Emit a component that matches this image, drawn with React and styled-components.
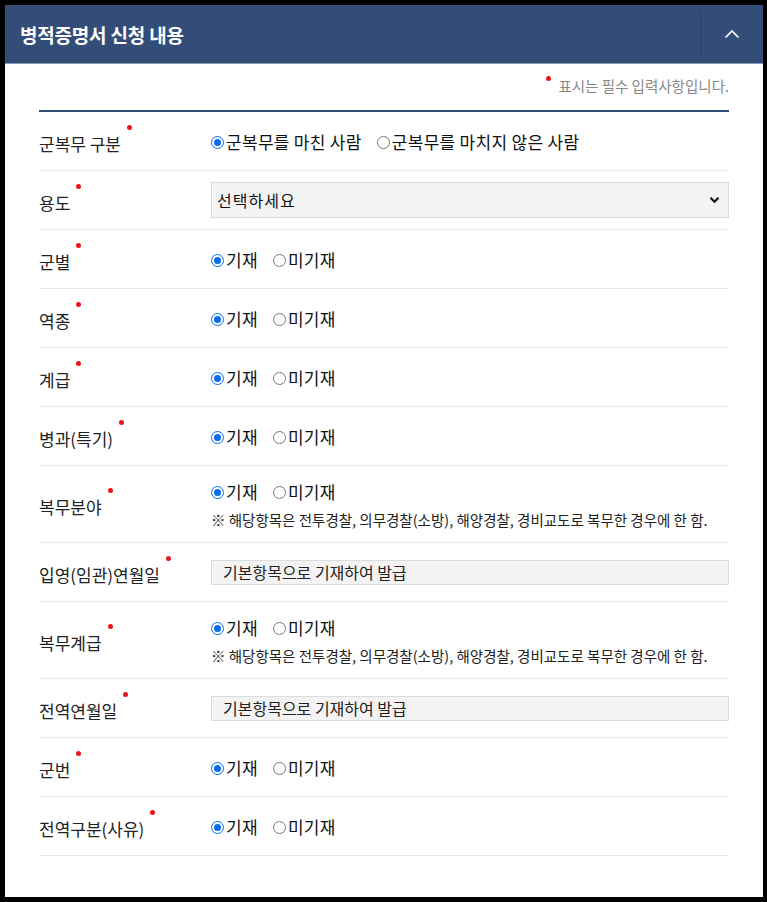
import React from "react";
import styled, { createGlobalStyle } from "styled-components";

const GlobalStyle = createGlobalStyle`
  html, body { margin: 0; padding: 0; background: #000; }
  body { font-family: "Noto Sans CJK KR", "Noto Sans", sans-serif; }
`;

const Frame = styled.div`
  background: #000;
  padding: 5px 4px 5px 5px;
  width: 767px;
  height: 902px;
  box-sizing: border-box;
`;

const Panel = styled.section`
  background: #fff;
  height: 100%;
  display: flex;
  flex-direction: column;
`;

const Header = styled.div`
  height: 59px;
  background: #344d78;
  border-bottom: 1px solid #8898b4;
  display: flex;
  align-items: center;
  justify-content: space-between;
  box-sizing: border-box;
`;

const Title = styled.h2`
  margin: 0 0 0 15px;
  color: #fff;
  font-size: 19px;
  font-weight: 700;
  letter-spacing: -0.2px;
`;

const Toggle = styled.button`
  width: 63px;
  height: 44px;
  border: 0;
  border-left: 1px solid #2a3f63;
  background: transparent;
  display: flex;
  align-items: center;
  justify-content: center;
  padding: 0;
`;

const Body = styled.div`
  padding: 0 34px;
`;

const Note = styled.p`
  margin: 11px 0 0;
  text-align: right;
  font-size: 14.5px;
  color: #888;
  padding-bottom: 14px;
  border-bottom: 2px solid #344d78;
`;

const Dot = styled.span`
  display: inline-block;
  width: 5px;
  height: 5px;
  border-radius: 50%;
  background: #e8141c;
  vertical-align: top;
  margin: ${({ $note }) => ($note ? "1px 7px 0 0" : "-6px 0 0 6px")};
`;

const Row = styled.div`
  display: grid;
  grid-template-columns: 172px 1fr;
  align-items: center;
  min-height: ${({ $tall }) => ($tall ? "76px" : "58px")};
  border-bottom: 1px solid #e8e8e8;
`;

const Label = styled.div`
  font-size: 17px;
  color: #222;
  padding-top: 4px;
`;

const Options = styled.div`
  display: flex;
  align-items: center;
  gap: 15px;
  font-size: 17px;
  color: #111;
  letter-spacing: 0.3px;
`;

const Option = styled.label`
  display: flex;
  align-items: center;
`;

const Radio = styled.span`
  width: 13px;
  height: 13px;
  border-radius: 50%;
  box-sizing: border-box;
  border: 1px solid ${({ $on }) => ($on ? "#0a6cf0" : "#767676")};
  margin: 2px 2px 0 0;
  display: flex;
  align-items: center;
  justify-content: center;
  &::after {
    content: "";
    width: 7px;
    height: 7px;
    border-radius: 50%;
    background: ${({ $on }) => ($on ? "#0a6cf0" : "transparent")};
  }
`;

const Value = styled.div`
  display: flex;
  flex-direction: column;
  gap: 5px;
`;

const Hint = styled.div`
  font-size: 14.5px;
  color: #222;
`;

const Select = styled.div`
  height: 36px;
  box-sizing: border-box;
  border: 1px solid #dcdcdc;
  background: #f3f3f3;
  display: flex;
  align-items: center;
  justify-content: space-between;
  padding: 0 8px 0 5px;
  font-size: 16px;
  letter-spacing: 1px;
  color: #111;
`;

const ReadOnly = styled.div`
  height: 25px;
  box-sizing: border-box;
  border: 1px solid #dcdcdc;
  background: #f3f3f3;
  display: flex;
  align-items: center;
  padding: 0 11px;
  font-size: 16px;
  color: #222;
`;

const HINT = "※ 해당항목은 전투경찰, 의무경찰(소방), 해양경찰, 경비교도로 복무한 경우에 한 함.";

const YesNo = () => (
  <Options>
    <Option><Radio $on />기재</Option>
    <Option><Radio />미기재</Option>
  </Options>
);

const rows = [
  { label: "군복무 구분", kind: "service" },
  { label: "용도", kind: "select" },
  { label: "군별", kind: "yn" },
  { label: "역종", kind: "yn" },
  { label: "계급", kind: "yn" },
  { label: "병과(특기)", kind: "yn" },
  { label: "복무분야", kind: "ynHint" },
  { label: "입영(임관)연월일", kind: "fixed" },
  { label: "복무계급", kind: "ynHint" },
  { label: "전역연월일", kind: "fixed" },
  { label: "군번", kind: "yn" },
  { label: "전역구분(사유)", kind: "yn" },
];

const renderValue = (kind) => {
  switch (kind) {
    case "service":
      return (
        <Options>
          <Option><Radio $on />군복무를 마친 사람</Option>
          <Option><Radio />군복무를 마치지 않은 사람</Option>
        </Options>
      );
    case "select":
      return (
        <Select>
          선택하세요
          <svg width="11" height="8" viewBox="0 0 11 8">
            <path d="M1.5 1.8 L5.5 5.8 L9.5 1.8" fill="none" stroke="#111" strokeWidth="2.2" />
          </svg>
        </Select>
      );
    case "ynHint":
      return (
        <Value>
          <YesNo />
          <Hint>{HINT}</Hint>
        </Value>
      );
    case "fixed":
      return <ReadOnly>기본항목으로 기재하여 발급</ReadOnly>;
    default:
      return <YesNo />;
  }
};

export default function App() {
  return (
    <>
      <GlobalStyle />
      <Frame>
        <Panel>
          <Header>
            <Title>병적증명서 신청 내용</Title>
            <Toggle aria-label="접기">
              <svg width="16" height="10" viewBox="0 0 16 10">
                <path d="M1.5 8.5 L8 2 L14.5 8.5" fill="none" stroke="#fff" strokeWidth="1.6" />
              </svg>
            </Toggle>
          </Header>
          <Body>
            <Note><Dot $note />표시는 필수 입력사항입니다.</Note>
            {rows.map((r) => (
              <Row key={r.label} $tall={r.kind === "ynHint"}>
                <Label>{r.label}<Dot /></Label>
                {renderValue(r.kind)}
              </Row>
            ))}
          </Body>
        </Panel>
      </Frame>
    </>
  );
}
